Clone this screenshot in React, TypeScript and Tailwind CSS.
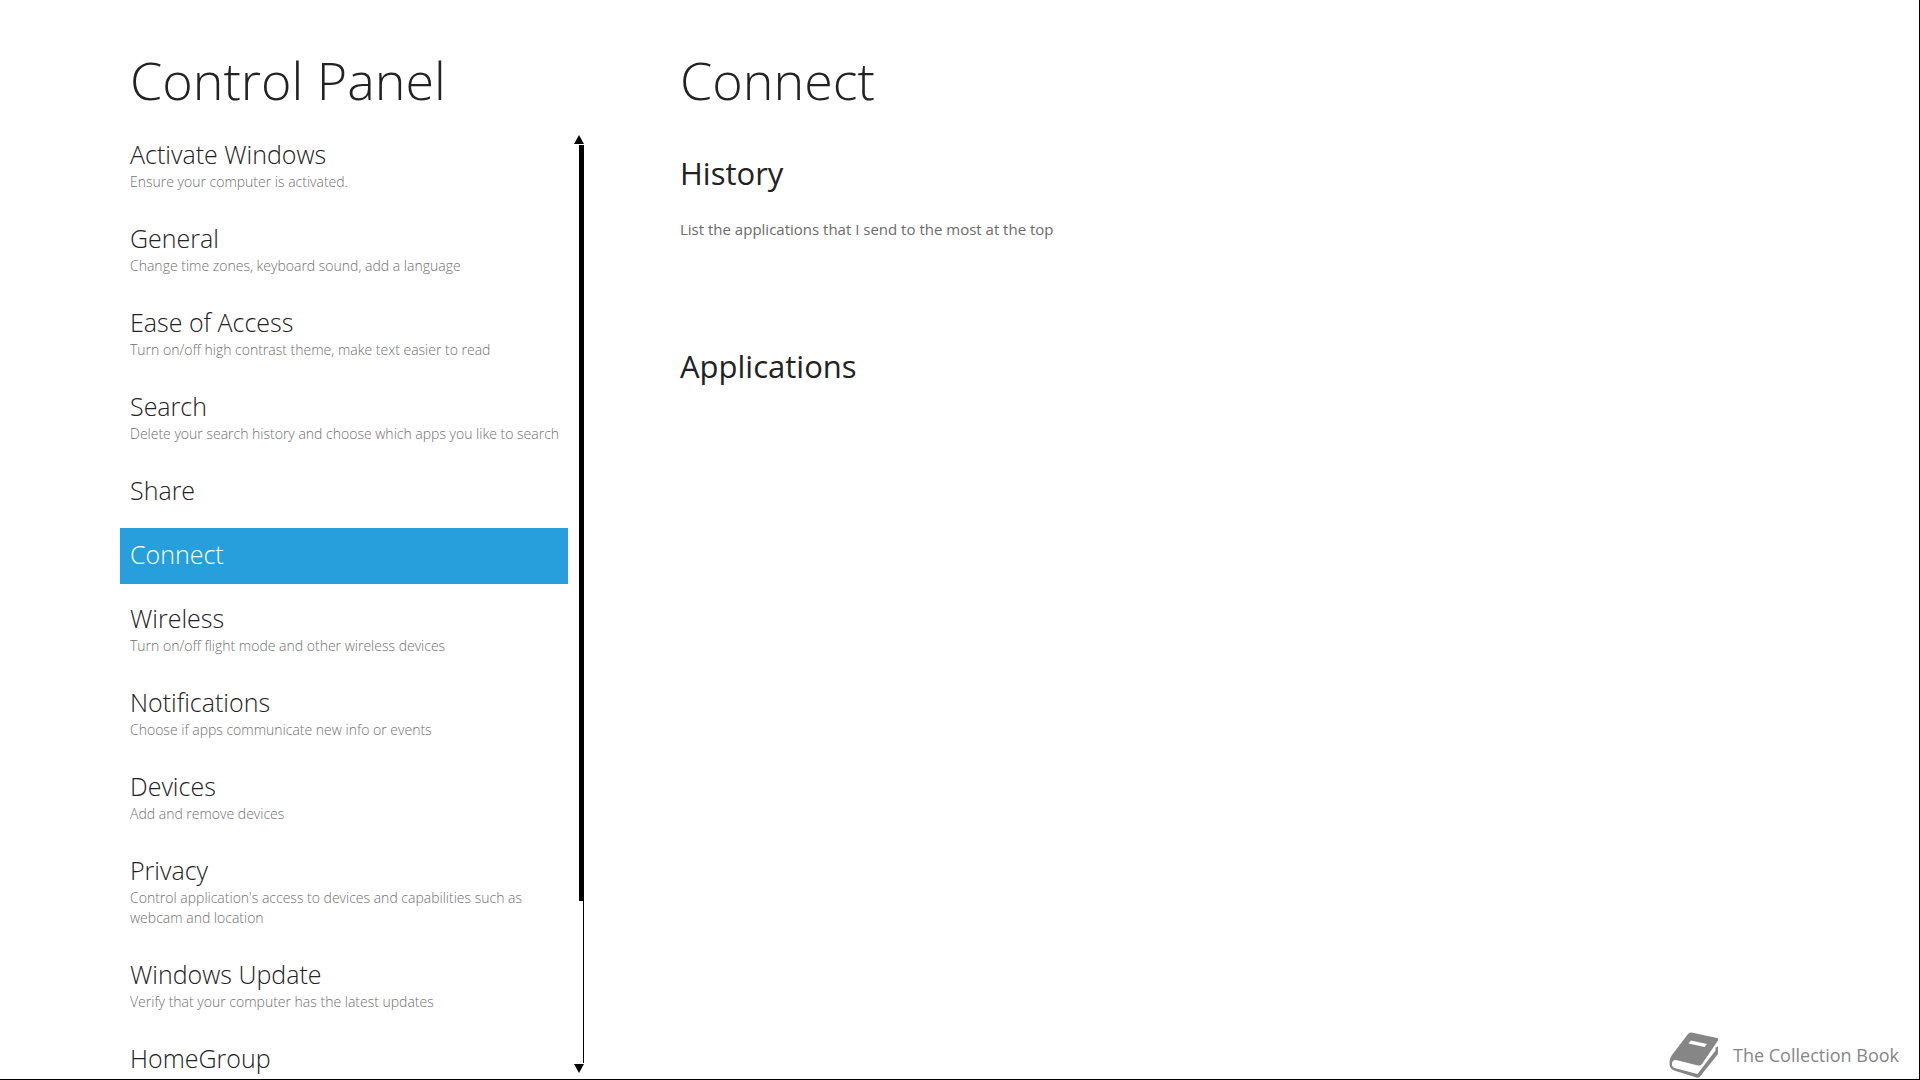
import { useState } from "react";

interface Setting {
    title: string;
    description?: string;
}

const settings: Setting[] = [
    { title: "Activate Windows", description: "Ensure your computer is activated." },
    { title: "General", description: "Change time zones, keyboard sound, add a language" },
    { title: "Ease of Access", description: "Turn on/off high contrast theme, make text easier to read" },
    { title: "Search", description: "Delete your search history and choose which apps you like to search" },
    { title: "Share" },
    { title: "Connect" },
    { title: "Wireless", description: "Turn on/off flight mode and other wireless devices" },
    { title: "Notifications", description: "Choose if apps communicate new info or events" },
    { title: "Devices", description: "Add and remove devices" },
    {
        title: "Privacy",
        description: "Control application's access to devices and capabilities such as webcam and location",
    },
    { title: "Windows Update", description: "Verify that your computer has the latest updates" },
    { title: "HomeGroup" },
];

function SettingItem({ setting, active, onSelect }: { setting: Setting; active: boolean; onSelect: () => void }) {
    return (
        <li>
            <button
                type="button"
                onClick={onSelect}
                aria-current={active ? "page" : undefined}
                className={`block w-full pt-2 pb-3 pl-[10px] text-left font-light ${
                    active ? "bg-[#269fdc] text-white" : "text-[#222222]"
                }`}
            >
                <span className="block text-[25px] leading-9">{setting.title}</span>
                {setting.description && (
                    <span className={`block text-[14px] leading-5 ${active ? "text-white" : "text-[#707070]"}`}>
                        {setting.description}
                    </span>
                )}
            </button>
        </li>
    );
}

function ScrollTrack() {
    return (
        <div className="flex w-[10px] flex-col pt-[7px] pb-[6px]" aria-hidden="true">
            <svg viewBox="0 0 10 9" className="h-[9px] w-[10px] shrink-0">
                <path d="M5 0L10 9H0z" />
            </svg>
            <div className="mt-px flex min-h-0 flex-1 flex-col items-end">
                <div className="w-[5px] flex-[756] bg-black" />
                <div className="w-px flex-[162] bg-black" />
            </div>
            <svg viewBox="0 0 10 9" className="mt-px h-[9px] w-[10px] shrink-0">
                <path d="M0 0H10L5 9z" />
            </svg>
        </div>
    );
}

function BookIcon() {
    return (
        <svg viewBox="0 0 50 46" className="h-[46px] w-[50px]" fill="#868686" aria-hidden="true">
            <path
                fillRule="evenodd"
                d="M22.500 0.500L48 6Q50 6.500 49 8.500L33 32Q31.500 34 29 33.500L9 28.500Q4 27 3 31Q2.500 34.500 5.500 36L28.500 42L46.500 18.500V15.500L49 14.500V22L31 44.500Q29.500 46 27.500 45.500L5 38.500Q0 36.500 0.500 30Q0.500 26 3 23L19 2Q20.500 0 22.500 0.500ZM22 8.500L19.500 11.500L35.500 15L38 12Z"
            />
        </svg>
    );
}

export default function App() {
    const [selected, setSelected] = useState("Connect");

    return (
        <div className="flex h-screen overflow-hidden border-r border-b border-black bg-white pl-[120px] font-['Open_Sans','Noto_Sans',sans-serif] text-[#222222]">
            <aside className="flex w-[464px] shrink-0 flex-col">
                <h1 className="px-[10px] pt-10 pb-2 text-[52px] leading-[80px] font-light">Control Panel</h1>
                <div className="flex min-h-0 flex-1 justify-between">
                    <nav className="w-[448px] overflow-hidden" aria-label="Settings">
                        <ul className="flex flex-col gap-2">
                            {settings.map((setting) => (
                                <SettingItem
                                    key={setting.title}
                                    setting={setting}
                                    active={setting.title === selected}
                                    onSelect={() => setSelected(setting.title)}
                                />
                            ))}
                        </ul>
                    </nav>
                    <ScrollTrack />
                </div>
            </aside>

            <div className="flex flex-1 flex-col justify-between pl-24">
                <main>
                    <h2 className="pt-10 text-[52px] leading-[80px] font-light">Connect</h2>
                    <section className="pt-[31px]">
                        <h3 className="text-[31px] leading-[44px]">History</h3>
                        <p className="pt-6 text-[15px] leading-5 text-[#6b6b6b]">
                            List the applications that I send to the most at the top
                        </p>
                    </section>
                    <section className="pt-[105px]">
                        <h3 className="text-[31px] leading-[44px]">Applications</h3>
                    </section>
                </main>
                <footer className="flex items-center justify-end gap-[14px] pr-5 pb-px text-[#868686]">
                    <BookIcon />
                    <span className="text-[18px] leading-6">The Collection Book</span>
                </footer>
            </div>
        </div>
    );
}
